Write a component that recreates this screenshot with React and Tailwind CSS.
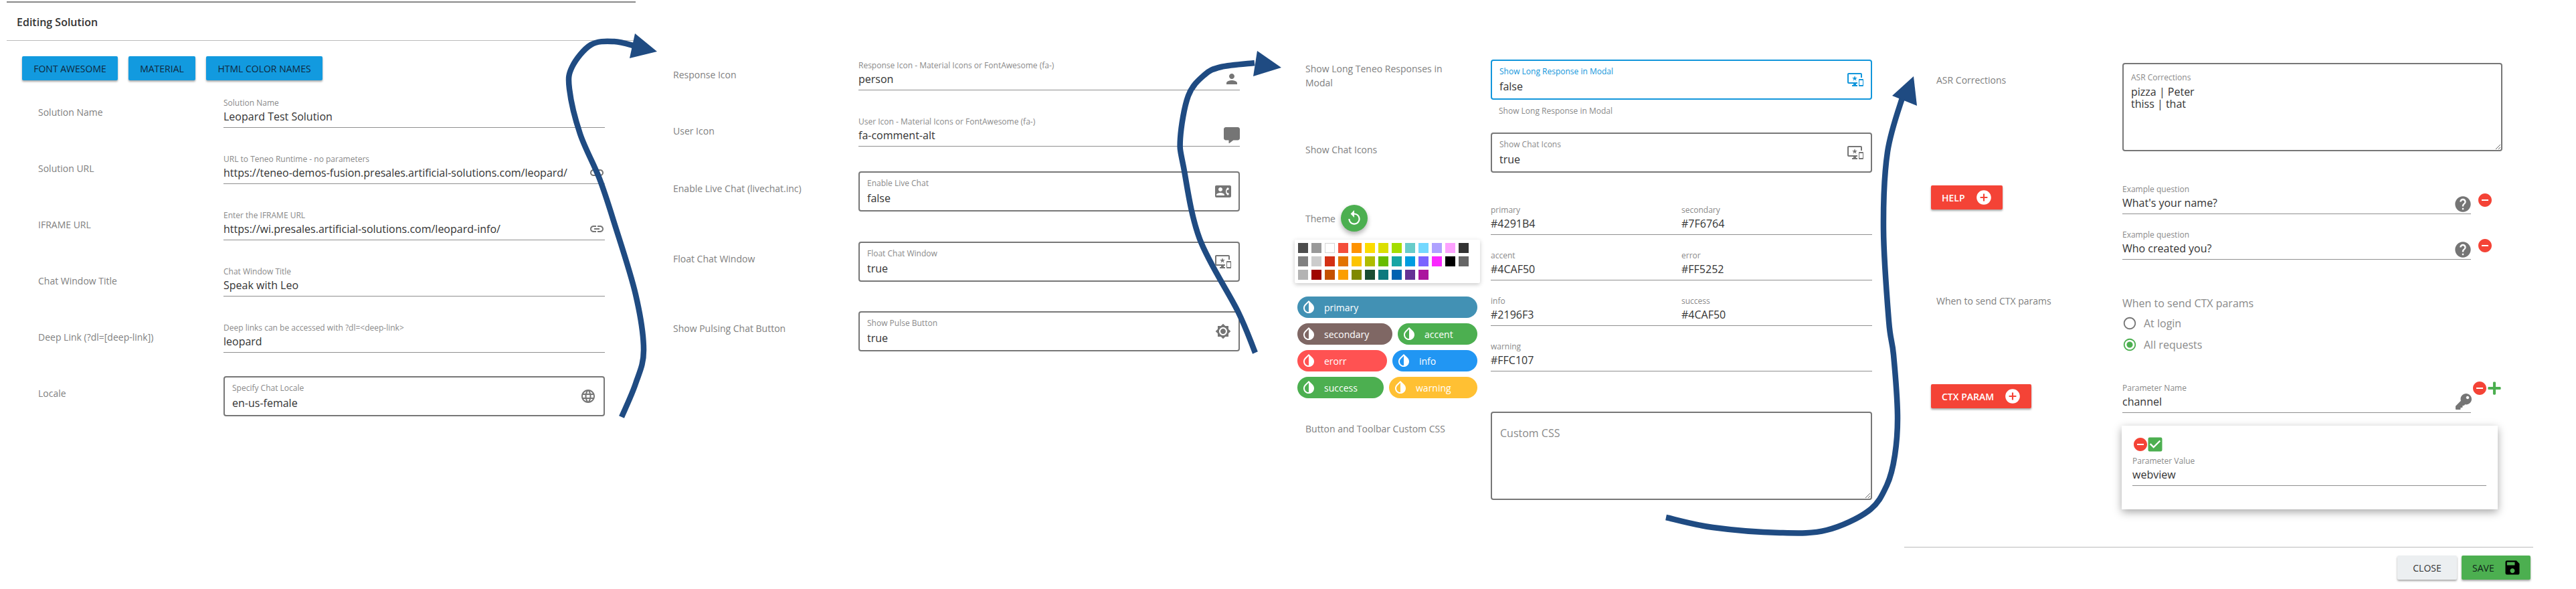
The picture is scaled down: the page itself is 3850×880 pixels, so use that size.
import React from "react";
import {
  MdPerson, MdLink, MdLanguage, MdContactPhone, MdImportantDevices, MdBrightness7,
  MdReplay, MdInvertColors, MdHelp, MdAddCircle, MdRemoveCircle, MdCheckBox, MdSave,
  MdRadioButtonUnchecked, MdRadioButtonChecked,
} from "react-icons/md";
import { FaCommentAlt, FaKey, FaPlus } from "react-icons/fa";

const smooth = (pts) => {
  let d = `M${pts[0][0]} ${pts[0][1]}`;
  for (let i = 0; i < pts.length - 1; i++) {
    const p0 = pts[i - 1] || pts[i], p1 = pts[i], p2 = pts[i + 1], p3 = pts[i + 2] || p2;
    const c1 = [p1[0] + (p2[0] - p0[0]) / 6, p1[1] + (p2[1] - p0[1]) / 6];
    const c2 = [p2[0] - (p3[0] - p1[0]) / 6, p2[1] - (p3[1] - p1[1]) / 6];
    d += ` C${c1[0]} ${c1[1]} ${c2[0]} ${c2[1]} ${p2[0]} ${p2[1]}`;
  }
  return d;
};

const ARROWS = [
  {
    line: [[929, 623], [950, 573], [962, 523], [950, 440], [918, 333], [896, 267], [867, 200], [851, 133], [855, 100], [883, 67], [918, 62], [950, 69]],
    head: "949,50 982,77 941,87",
  },
  {
    line: [[1876, 527], [1850, 465], [1793, 357], [1769, 250], [1764, 207], [1776, 143], [1800, 112], [1825, 100], [1875, 94]],
    head: "1879,76 1915,101 1873,114",
  },
  {
    line: [[2490, 773], [2560, 788], [2660, 796], [2730, 792], [2793, 763], [2820, 725], [2832, 680], [2836, 620], [2830, 530], [2823, 480], [2815, 343], [2821, 227], [2845, 140]],
    head: "2860,114 2828,143 2865,158",
  },
];

const PALETTE = [
  "#4d4d4d", "#999999", "#ffffff", "#f44e3b", "#fe9200", "#fcdc00", "#dbdf00", "#a4dd00", "#68ccca", "#73d8ff", "#aea1ff", "#fda1ff", "#333333",
  "#808080", "#cccccc", "#d33115", "#e27300", "#fcc400", "#b0bc00", "#68bc00", "#16a5a5", "#009ce0", "#7b64ff", "#fa28ff", "#000000", "#666666",
  "#b3b3b3", "#9f0500", "#c45100", "#fb9e00", "#808900", "#194d33", "#0c797d", "#0062b1", "#653294", "#ab149e",
];

const Field = ({ label, value, icon, className = "" }) => (
  <div className={`h-[45px] border-b border-[#8f8f8f] ${className}`}>
    <div className="h-[16px] text-[12px] leading-[16px] text-[#8a8a8a] whitespace-nowrap">{label}</div>
    <div className="flex h-[24px] items-center justify-between">
      <span className="text-[16px] leading-[24px] text-[#333333] whitespace-nowrap">{value}</span>
      {icon}
    </div>
  </div>
);

const Box = ({ label, value, icon, active = false, className = "" }) => (
  <div className={`flex h-[60px] items-center justify-between rounded-[4px] border-2 px-[11px] ${active ? "border-[#1296db]" : "border-[#777777]"} ${className}`}>
    <div className="mt-[2px]">
      <div className={`h-[16px] text-[12px] leading-[16px] whitespace-nowrap ${active ? "text-[#1296db]" : "text-[#8a8a8a]"}`}>{label}</div>
      <div className="mt-[2px] h-[24px] text-[16px] leading-[24px] text-[#333333]">{value}</div>
    </div>
    {icon}
  </div>
);

const RowLabel = ({ children, className = "" }) => (
  <div className={`text-[14px] leading-[21px] text-[#808080] ${className}`}>{children}</div>
);

const Row = ({ label, box = false, className = "", labelClass = "", children }) => (
  <div className={`flex ${className}`}>
    <div className={labelClass}>
      <RowLabel className={box ? "pt-[15px]" : "pt-[11px]"}>{label}</RowLabel>
    </div>
    {children}
  </div>
);

const grey = "#757575";
const blue = "#1296db";

const TopButton = ({ children, className = "" }) => (
  <div className={`flex h-[36px] items-center justify-center rounded-[2px] bg-[#129adf] text-[14px] font-medium text-[#10283c] shadow-[0_2px_3px_rgba(0,0,0,0.35)] ${className}`}>
    {children}
  </div>
);

const RedButton = ({ children, className = "" }) => (
  <div className={`flex h-[36px] items-center justify-between rounded-[2px] bg-[#f44336] pl-[16px] pr-[15px] text-[14px] font-semibold text-white shadow-[0_2px_3px_rgba(0,0,0,0.35)] ${className}`}>
    <span>{children}</span>
    <MdAddCircle size={26} color="#ffffff" />
  </div>
);

const Chip = ({ name, className }) => (
  <div className={`flex h-[32px] items-center rounded-full pl-[5px] text-[14px] font-medium text-white ${className}`}>
    <MdInvertColors size={24} color="#ffffff" className="mr-[11px] shrink-0" />
    <span>{name}</span>
  </div>
);

export default function App() {
  return (
    <div className="relative flex h-[880px] w-[3850px] overflow-hidden bg-white font-['Open_Sans',sans-serif]">
      {/* Panel 1 */}
      <div className="ml-[10px] w-[940px] shrink-0">
        <div className="mt-[2px] h-[2px] bg-[#888888]" />
        <div className="flex h-[57px] items-center border-b border-[#bbbbbb] pl-[15px] pt-[1px] text-[16px] font-semibold text-[#333333]">
          Editing Solution
        </div>
        <div className="ml-[23px] mt-[23px] flex gap-[16px]">
          <TopButton className="w-[143px]">FONT AWESOME</TopButton>
          <TopButton className="w-[100px]">MATERIAL</TopButton>
          <TopButton className="w-[174px]">HTML COLOR NAMES</TopButton>
        </div>
        <Row label="Solution Name" className="mt-[26px]" labelClass="w-[324px] pl-[47px]">
          <Field label="Solution Name" value="Leopard Test Solution" className="w-[570px]" />
        </Row>
        <Row label="Solution URL" className="mt-[39px]" labelClass="w-[324px] pl-[47px]">
          <Field label="URL to Teneo Runtime - no parameters" value="https://teneo-demos-fusion.presales.artificial-solutions.com/leopard/" icon={<MdLink size={24} color={grey} />} className="w-[570px]" />
        </Row>
        <Row label="IFRAME URL" className="mt-[39px]" labelClass="w-[324px] pl-[47px]">
          <Field label="Enter the IFRAME URL" value="https://wi.presales.artificial-solutions.com/leopard-info/" icon={<MdLink size={24} color={grey} />} className="w-[570px]" />
        </Row>
        <Row label="Chat Window Title" className="mt-[39px]" labelClass="w-[324px] pl-[47px]">
          <Field label="Chat Window Title" value="Speak with Leo" className="w-[570px]" />
        </Row>
        <Row label="Deep Link (?dl=[deep-link])" className="mt-[39px]" labelClass="w-[324px] pl-[47px]">
          <Field label="Deep links can be accessed with ?dl=<deep-link>" value="leopard" className="w-[570px]" />
        </Row>
        <Row label="Locale" box className="mt-[35px]" labelClass="w-[324px] pl-[47px]">
          <Box label="Specify Chat Locale" value="en-us-female" icon={<MdLanguage size={24} color={grey} />} className="w-[570px]" />
        </Row>
      </div>

      {/* Panel 2 */}
      <div className="w-[985px] shrink-0 pt-[90px]">
        <Row label="Response Icon" labelClass="w-[333px] pl-[56px]">
          <Field label="Response Icon - Material Icons or FontAwesome (fa-)" value="person" icon={<MdPerson size={24} color={grey} />} className="w-[570px]" />
        </Row>
        <Row label="User Icon" className="mt-[39px]" labelClass="w-[333px] pl-[56px]">
          <Field label="User Icon - Material Icons or FontAwesome (fa-)" value="fa-comment-alt" icon={<FaCommentAlt size={24} color={grey} />} className="w-[570px]" />
        </Row>
        <Row label="Enable Live Chat (livechat.inc)" box className="mt-[37px]" labelClass="w-[333px] pl-[56px]">
          <Box label="Enable Live Chat" value="false" icon={<MdContactPhone size={24} color={grey} />} className="w-[570px]" />
        </Row>
        <Row label="Float Chat Window" box className="mt-[45px]" labelClass="w-[333px] pl-[56px]">
          <Box label="Float Chat Window" value="true" icon={<MdImportantDevices size={24} color={grey} />} className="w-[570px]" />
        </Row>
        <Row label="Show Pulsing Chat Button" box className="mt-[44px]" labelClass="w-[333px] pl-[56px]">
          <Box label="Show Pulse Button" value="true" icon={<MdBrightness7 size={24} color={grey} />} className="w-[570px]" />
        </Row>
      </div>

      {/* Panel 3 */}
      <div className="w-[911px] shrink-0 pt-[89px]">
        <div className="flex">
          <div className="w-[293px] pl-[16px] pr-[60px]">
            <RowLabel className="pt-[3px]">Show Long Teneo Responses in Modal</RowLabel>
          </div>
          <div className="w-[570px]">
            <Box label="Show Long Response in Modal" value="false" active icon={<MdImportantDevices size={24} color={blue} />} />
            <div className="mt-[9px] pl-[12px] text-[12px] leading-[16px] text-[#8a8a8a]">Show Long Response in Modal</div>
          </div>
        </div>
        <Row label="Show Chat Icons" box className="mt-[24px]" labelClass="w-[293px] pl-[16px]">
          <Box label="Show Chat Icons" value="true" icon={<MdImportantDevices size={24} color={grey} />} className="w-[570px]" />
        </Row>

        <div className="mt-[48px] flex h-[289px]">
          <div className="w-[293px]">
            <div className="flex h-[40px] items-center gap-[8px] pl-[16px]">
              <RowLabel>Theme</RowLabel>
              <div className="flex h-[40px] w-[40px] items-center justify-center rounded-full bg-[#4caf50] shadow-[0_4px_7px_rgba(0,0,0,0.3)]">
                <MdReplay size={26} color="#ffffff" />
              </div>
            </div>
            <div className="mt-[12px] h-[65px] w-[277px] rounded-[2px] bg-white p-[5px] shadow-[0_2px_6px_rgba(0,0,0,0.22)]">
              <div className="grid grid-cols-[repeat(13,15px)] gap-[5px]">
                {PALETTE.map((c, i) => (
                  <div
                    key={i}
                    className={`h-[15px] w-[15px] ${c === "#ffffff" ? "border border-[#d5d5d5]" : ""}`}
                    style={{ backgroundColor: c }}
                  />
                ))}
              </div>
            </div>
            <div className="ml-[4px] mt-[20px] flex w-[269px] flex-col gap-[8px]">
              <Chip name="primary" className="w-[269px] bg-[#4291b4]" />
              <div className="flex gap-[8px]">
                <Chip name="secondary" className="w-[142px] bg-[#7f6764]" />
                <Chip name="accent" className="w-[119px] bg-[#4caf50]" />
              </div>
              <div className="flex gap-[8px]">
                <Chip name="erorr" className="w-[134px] bg-[#ff5252]" />
                <Chip name="info" className="w-[127px] bg-[#2196f3]" />
              </div>
              <div className="flex gap-[8px]">
                <Chip name="success" className="w-[129px] bg-[#4caf50]" />
                <Chip name="warning" className="w-[132px] bg-[#ffc033]" />
              </div>
            </div>
          </div>
          <div className="grid h-fit w-[570px] grid-cols-2 gap-y-[23px]">
            <Field label="primary" value="#4291B4" />
            <Field label="secondary" value="#7F6764" />
            <Field label="accent" value="#4CAF50" />
            <Field label="error" value="#FF5252" />
            <Field label="info" value="#2196F3" />
            <Field label="success" value="#4CAF50" />
            <Field label="warning" value="#FFC107" className="col-span-2" />
          </div>
        </div>

        <Row label="Button and Toolbar Custom CSS" box className="mt-[20px]" labelClass="w-[293px] pl-[16px]">
          <textarea
            readOnly
            placeholder="Custom CSS"
            className="h-[132px] w-[570px] resize rounded-[4px] border-2 border-[#777777] px-[12px] pt-[18px] text-[16px] leading-[24px] outline-none placeholder:text-[#8a8a8a]"
          />
        </Row>
      </div>

      {/* Panel 4 */}
      <div className="w-[940px] shrink-0 pt-[94px]">
        <Row label="ASR Corrections" box labelClass="w-[326px] pl-[48px]">
          <div className="flex h-[132px] w-[568px] flex-col rounded-[4px] border-2 border-[#777777] pl-[11px] pt-[12px]">
            <div className="h-[16px] text-[12px] leading-[16px] text-[#8a8a8a]">ASR Corrections</div>
            <textarea
              readOnly
              value={"pizza | Peter\nthiss | that"}
              className="mt-[4px] w-full flex-1 resize text-[16px] leading-[18px] text-[#333333] outline-none"
            />
          </div>
        </Row>

        <div className="mt-[49px] flex">
          <div className="w-[326px] pl-[40px] pt-[2px]">
            <RedButton className="w-[107px]">HELP</RedButton>
          </div>
          <div className="flex flex-col gap-[23px]">
            <div className="flex items-start">
              <Field label="Example question" value="What's your name?" icon={<MdHelp size={28} color={grey} className="-mr-[2px] mt-[4px]" />} className="w-[521px]" />
              <MdRemoveCircle size={24} color="#f44336" className="ml-[9px] mt-[12px]" />
            </div>
            <div className="flex items-start">
              <Field label="Example question" value="Who created you?" icon={<MdHelp size={28} color={grey} className="-mr-[2px] mt-[4px]" />} className="w-[521px]" />
              <MdRemoveCircle size={24} color="#f44336" className="ml-[9px] mt-[12px]" />
            </div>
          </div>
        </div>

        <div className="mt-[51px] flex">
          <div className="w-[326px] pl-[48px]">
            <RowLabel>When to send CTX params</RowLabel>
          </div>
          <div className="pt-[3px] text-[16px] text-[#8a8a8a]">
            <div className="leading-[22px]">When to send CTX params</div>
            <div className="mt-[3px] flex h-[32px] items-center gap-[10px]">
              <MdRadioButtonUnchecked size={22} color={grey} />
              <span>At login</span>
            </div>
            <div className="flex h-[32px] items-center gap-[10px]">
              <MdRadioButtonChecked size={22} color="#4caf50" />
              <span>All requests</span>
            </div>
          </div>
        </div>

        <div className="mt-[41px] flex">
          <div className="w-[326px] pl-[40px] pt-[2px]">
            <RedButton className="w-[150px]">CTX PARAM</RedButton>
          </div>
          <div>
            <div className="flex items-start">
              <Field label="Parameter Name" value="channel" icon={<FaKey size={24} color={grey} className="-mr-[1px] -mt-[1px]" />} className="w-[521px]" />
              <MdRemoveCircle size={24} color="#f44336" className="-mt-[4px] ml-[1px]" />
              <FaPlus size={22} color="#4caf50" className="-ml-[1px] -mt-[3px]" />
            </div>
            <div className="-ml-[1px] mt-[19px] h-[125px] w-[562px] bg-white pl-[16px] pt-[14px] shadow-[0_4px_12px_rgba(0,0,0,0.35)]">
              <div className="flex h-[28px] items-center">
                <MdRemoveCircle size={24} color="#f44336" />
                <MdCheckBox size={28} color="#4caf50" className="-ml-[4px]" />
              </div>
              <Field label="Parameter Value" value="webview" className="mt-[3px] w-[529px]" />
            </div>
          </div>
        </div>

        <div className="mt-[56px] h-[1px] bg-[#bbbbbb]" />
        <div className="mt-[12px] flex w-[936px] justify-end gap-[7px]">
          <div className="flex h-[36px] w-[89px] items-center justify-center rounded-[2px] bg-[#eceff1] text-[14px] text-[#333333] shadow-[0_2px_3px_rgba(0,0,0,0.35)]">CLOSE</div>
          <div className="flex h-[36px] w-[103px] items-center justify-between rounded-[2px] bg-[#4caf50] pl-[16px] pr-[13px] text-[14px] text-[#10231a] shadow-[0_2px_3px_rgba(0,0,0,0.35)]">
            <span>SAVE</span>
            <MdSave size={28} color="#000000" />
          </div>
        </div>
      </div>

      {/* Annotation arrows drawn over the page */}
      <svg className="pointer-events-none absolute left-0 top-0" width="3850" height="880">
        {ARROWS.map((a, i) => (
          <g key={i}>
            <path d={smooth(a.line)} fill="none" stroke="#1f4b82" strokeWidth="8.5" />
            <polygon points={a.head} fill="#1f4b82" />
          </g>
        ))}
      </svg>
    </div>
  );
}
